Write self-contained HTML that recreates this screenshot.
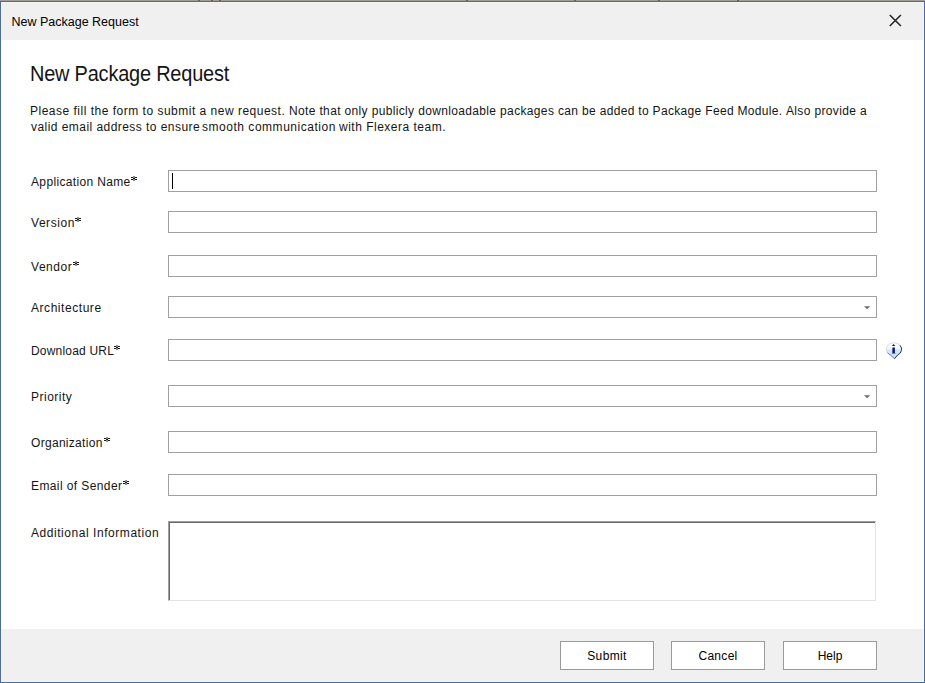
<!DOCTYPE html>
<html>
<head>
<meta charset="utf-8">
<style>
html,body{margin:0;padding:0;}
body{width:925px;height:683px;position:relative;overflow:hidden;background:#a09e9b;font-family:"Liberation Sans",sans-serif;color:#000;}
.abs{position:absolute;}
#frame{left:0;top:1px;width:925px;height:682px;box-sizing:border-box;border:1px solid #4b6b9d;background:#f5f5f0;}
#titlebar{left:2px;top:3px;width:921px;height:37px;background:#f0f0f0;}
#content{left:1px;top:40px;width:923px;height:589px;background:#fff;}
#footer{left:2px;top:629px;width:921px;height:52px;background:#f0f0f0;}
.t{position:absolute;white-space:nowrap;line-height:16px;}
.ast{position:absolute;width:6px;height:5px;}
.lbl{color:#141414;font-size:12px;letter-spacing:0.45px;}
.inp{position:absolute;left:168px;width:709px;height:22px;box-sizing:border-box;border:1px solid #a0a0a0;background:#fff;}
.arrow{position:absolute;left:694px;top:8px;width:9px;height:6px;}
.btn{position:absolute;top:641px;width:94px;height:29px;box-sizing:border-box;border:1px solid #9a9a9a;background:#fff;font-size:12px;text-align:center;line-height:29px;}
</style>
</head>
<body>
<svg class="abs" style="left:0;top:0" width="925" height="1"><rect x="198" y="0" width="2" height="1" fill="#6e6352"/><rect x="211" y="0" width="2" height="1" fill="#6e6352"/><rect x="219" y="0" width="2" height="1" fill="#6e6352"/><rect x="466" y="0" width="2" height="1" fill="#6e6352"/><rect x="574" y="0" width="2" height="1" fill="#6e6352"/><rect x="658" y="0" width="2" height="1" fill="#6e6352"/><rect x="737" y="0" width="2" height="1" fill="#6e6352"/></svg>
<div id="frame" class="abs"></div>
<div id="titlebar" class="abs"></div>
<div id="content" class="abs"></div>
<div id="footer" class="abs"></div>

<div class="t" style="left:11.5px;top:14px;font-size:12.5px;">New Package Request</div>
<svg class="abs" style="left:884px;top:10px" width="24" height="20" viewBox="884 10 24 20">
  <path d="M889.8 15 L900.9 26 M900.9 15 L889.8 26" stroke="#262626" stroke-width="1.6" fill="none"/>
</svg>

<div class="t" style="left:30px;top:62px;font-size:21.2px;line-height:24px;letter-spacing:-0.2px;color:#141414;transform-origin:0 0;transform:scaleX(0.94);">New Package Request</div>
<div class="t lbl" style="left:30px;top:103px;letter-spacing:0.5px;">Please fill the form to submit a new request.</div>
<div class="t lbl" style="left:289px;top:103px;letter-spacing:0.35px;">Note that only publicly downloadable packages</div>
<div class="t lbl" style="left:558px;top:103px;letter-spacing:0.325px;">can be added to Package Feed Module.</div>
<div class="t lbl" style="left:786px;top:103px;letter-spacing:0.35px;">Also provide a</div>
<div class="t lbl" style="left:31px;top:119px;letter-spacing:0.45px;">valid email address to ensure</div>
<div class="t lbl" style="left:202px;top:119px;letter-spacing:0.525px;">smooth communication</div>
<div class="t lbl" style="left:339px;top:119px;letter-spacing:0.5px;">with Flexera team.</div>

<div class="t lbl" style="left:31px;top:174px;letter-spacing:0.35px;">Application Name</div>
<div class="inp" style="top:170px;"><div class="abs" style="left:3px;top:2px;width:1px;height:16px;background:#000;"></div></div>

<div class="t lbl" style="left:31px;top:215px;letter-spacing:0.55px;">Version</div>
<div class="inp" style="top:211px;"></div>

<div class="t lbl" style="left:31px;top:259px;letter-spacing:0.55px;">Vendor</div>
<div class="inp" style="top:255px;"></div>

<div class="t lbl" style="left:31px;top:300px;letter-spacing:0.55px;">Architecture</div>
<div class="inp" style="top:296px;"><svg class="arrow" width="9" height="6" viewBox="0 0 9 6"><path d="M1 1.3H7.2L4.1 4.3Z" fill="#6b6b6b"/></svg></div>

<div class="t lbl" style="left:31px;top:343px;letter-spacing:0.2px;">Download URL</div>
<div class="inp" style="top:339px;"></div>
<svg class="abs" style="left:884px;top:340px" width="20" height="22" viewBox="884 340 20 22">
  <defs><linearGradient id="ig" x1="0" y1="0" x2="0" y2="1"><stop offset="0" stop-color="#ffffff"/><stop offset="0.35" stop-color="#f2f8fe"/><stop offset="0.48" stop-color="#d0e6fc"/><stop offset="1" stop-color="#c6e0fa"/></linearGradient></defs>
  <path d="M897.57 355.04 A7.6 6.5 0 1 0 890.43 355.04 L894.6 358.7 Z" fill="url(#ig)"/>
  <path d="M887.42 352.55 A7.6 6.5 0 0 1 899.99 345.3" fill="none" stroke="#c4c4c4" stroke-width="0.6"/>
  <path d="M899.99 345.3 A7.6 6.5 0 0 1 897.57 355.04 L894.6 358.7" fill="none" stroke="#14226a" stroke-width="0.95" stroke-linejoin="round"/>
  <path d="M894.6 358.7 L890.43 355.04 A7.6 6.5 0 0 1 887.42 352.55" fill="none" stroke="#3a3f96" stroke-width="0.85" stroke-opacity="0.85" stroke-linejoin="round"/>
  <path d="M893.6 343.9 L895.3 346 H891.9 Z" fill="#0a1470"/>
  <path d="M892.4 347.4 H894.9 V352.9 H895.4 V353.6 H892 V352.9 H892.4 Z" fill="#0a1470"/>
</svg>

<div class="t lbl" style="left:31px;top:389px;letter-spacing:0.5px;">Priority</div>
<div class="inp" style="top:385px;"><svg class="arrow" width="9" height="6" viewBox="0 0 9 6"><path d="M1 1.3H7.2L4.1 4.3Z" fill="#6b6b6b"/></svg></div>

<div class="t lbl" style="left:31px;top:435px;letter-spacing:0.3px;">Organization</div>
<div class="inp" style="top:431px;"></div>

<div class="t lbl" style="left:31px;top:478px;letter-spacing:0.4px;">Email of Sender</div>
<div class="inp" style="top:474px;"></div>

<div class="t lbl" style="left:31px;top:525px;letter-spacing:0.55px;">Additional Information</div>
<div class="abs" style="left:168px;top:521px;width:708px;height:80px;box-sizing:border-box;border-style:solid;border-width:1px;border-color:#a0a0a0 #e3e3e3 #e3e3e3 #a0a0a0;background:#fff;"><div class="abs" style="left:0;top:0;right:0;bottom:0;border-style:solid;border-width:1px 0 0 1px;border-color:#696969;"></div></div>

<svg class="ast" style="left:131px;top:176px" width="6" height="5" viewBox="0 0 6 5"><path d="M0 1H2V2H0ZM4 1H6V2H4ZM0 3H2V4H0ZM4 3H6V4H4ZM2 2H4V3H2Z" fill="#1a1a1a"/><path d="M2 0H4V2H2ZM2 3H4V5H2Z" fill="#1a1a1a" fill-opacity="0.5"/></svg>
<svg class="ast" style="left:75px;top:217px" width="6" height="5" viewBox="0 0 6 5"><path d="M0 1H2V2H0ZM4 1H6V2H4ZM0 3H2V4H0ZM4 3H6V4H4ZM2 2H4V3H2Z" fill="#1a1a1a"/><path d="M2 0H4V2H2ZM2 3H4V5H2Z" fill="#1a1a1a" fill-opacity="0.5"/></svg>
<svg class="ast" style="left:73px;top:261px" width="6" height="5" viewBox="0 0 6 5"><path d="M0 1H2V2H0ZM4 1H6V2H4ZM0 3H2V4H0ZM4 3H6V4H4ZM2 2H4V3H2Z" fill="#1a1a1a"/><path d="M2 0H4V2H2ZM2 3H4V5H2Z" fill="#1a1a1a" fill-opacity="0.5"/></svg>
<svg class="ast" style="left:114px;top:345px" width="6" height="5" viewBox="0 0 6 5"><path d="M0 1H2V2H0ZM4 1H6V2H4ZM0 3H2V4H0ZM4 3H6V4H4ZM2 2H4V3H2Z" fill="#1a1a1a"/><path d="M2 0H4V2H2ZM2 3H4V5H2Z" fill="#1a1a1a" fill-opacity="0.5"/></svg>
<svg class="ast" style="left:104px;top:437px" width="6" height="5" viewBox="0 0 6 5"><path d="M0 1H2V2H0ZM4 1H6V2H4ZM0 3H2V4H0ZM4 3H6V4H4ZM2 2H4V3H2Z" fill="#1a1a1a"/><path d="M2 0H4V2H2ZM2 3H4V5H2Z" fill="#1a1a1a" fill-opacity="0.5"/></svg>
<svg class="ast" style="left:123px;top:480px" width="6" height="5" viewBox="0 0 6 5"><path d="M0 1H2V2H0ZM4 1H6V2H4ZM0 3H2V4H0ZM4 3H6V4H4ZM2 2H4V3H2Z" fill="#1a1a1a"/><path d="M2 0H4V2H2ZM2 3H4V5H2Z" fill="#1a1a1a" fill-opacity="0.5"/></svg>
<div class="btn" style="left:560px;letter-spacing:0.35px;">Submit</div>
<div class="btn" style="left:671px;letter-spacing:0.3px;">Cancel</div>
<div class="btn" style="left:783px;">Help</div>
</body>
</html>
